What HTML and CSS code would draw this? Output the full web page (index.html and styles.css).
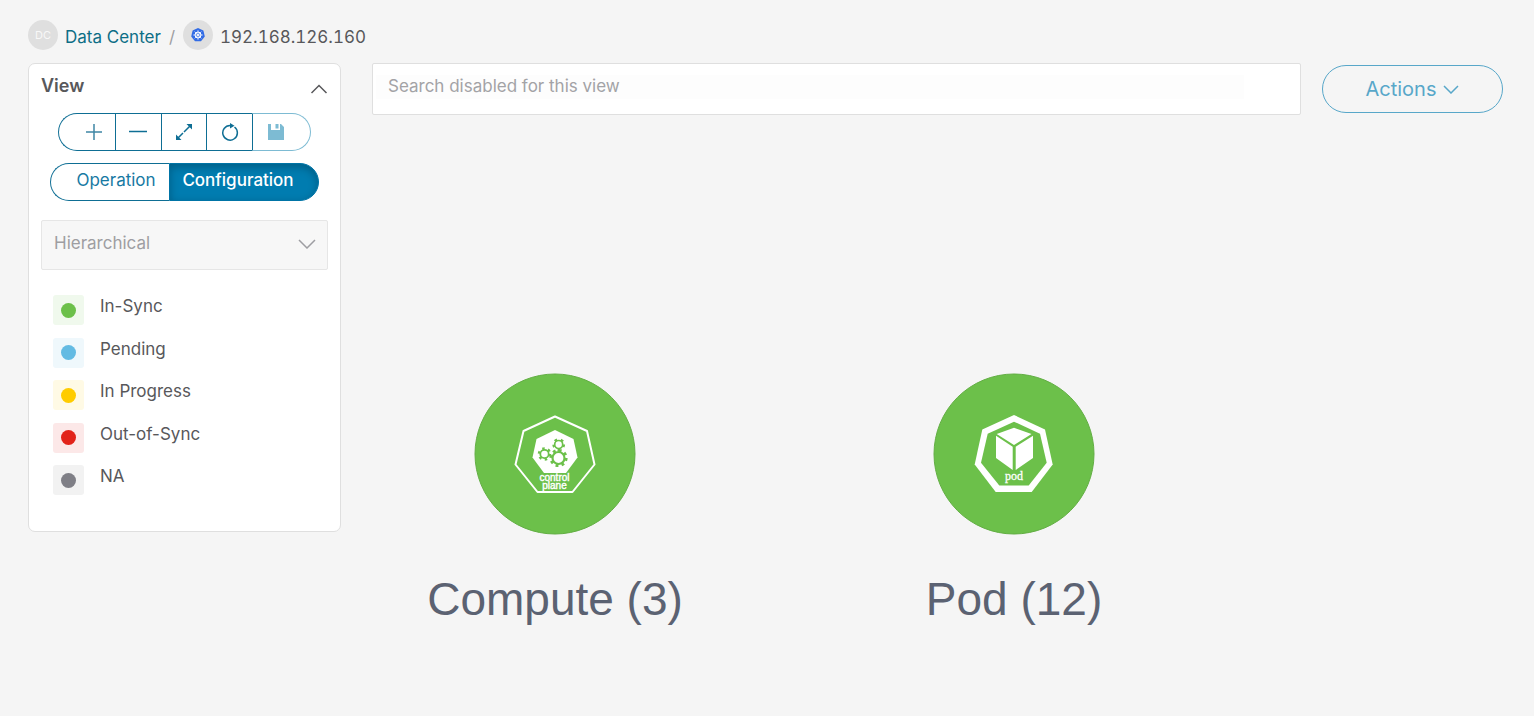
FILE: index.html
```
<!doctype html>
<html lang="en">
<head>
<meta charset="UTF-8">
<title>Data Center</title>
<link rel="stylesheet" href="styles.css">
</head>
<body>
	<nav class="breadcrumb">
		<span class="badge">DC</span>
		<a href="#">Data Center</a>
		<span class="separator">/</span>
		<span class="badge">
			<svg width="14" height="14" viewBox="0 0 14 14">
				<polygon points="7,0 12.4,2.6 13.8,8.5 10,13.2 4,13.2 0.2,8.5 1.6,2.6" fill="#326ce5"/>
				<g fill="none" stroke="#fff">
					<circle cx="7" cy="7" r="3" stroke-width="1"/>
					<path stroke-width=".7" d="M7 2.2v9.6M2.2 7h9.6M3.6 3.6l6.8 6.8M10.4 3.6l-6.8 6.8"/>
				</g>
			</svg>
		</span>
		<span class="current">192.168.126.160</span>
	</nav>

	<div class="layout">
		<aside class="panel">
			<div class="panel-header">
				<h2>View</h2>
				<button class="collapse" aria-label="Collapse">
					<svg width="18" height="10" viewBox="0 0 18 10"><path d="M1.5 9L9 1.5L16.5 9" fill="none" stroke="#58585b" stroke-width="1.5"/></svg>
				</button>
			</div>

			<div class="toolbar">
				<button aria-label="Zoom in">
					<svg width="18" height="18" viewBox="0 0 18 18"><path d="M9 1v16M1 9h16" stroke="#3f86a5" stroke-width="1.5"/></svg>
				</button>
				<button aria-label="Zoom out">
					<svg width="18" height="18" viewBox="0 0 18 18"><path d="M0 8.5h18" stroke="#0e6e94" stroke-width="1.5"/></svg>
				</button>
				<button aria-label="Fit">
					<svg width="18" height="18" viewBox="0 0 18 18">
						<path d="M3 15l5-5M9 9l6-6" stroke="#0e6e94" stroke-width="1.5"/>
						<path d="M17 1v5.500L11.500 1zM1 17v-5.500L6.500 17z" fill="#0e6e94"/>
					</svg>
				</button>
				<button aria-label="Refresh">
					<svg width="18" height="18" viewBox="0 0 18 18">
						<path d="M13.500 4A7.300 7.300 0 1 1 9 2.500H11" fill="none" stroke="#0e6e94" stroke-width="1.500"/>
						<path d="M9 0l4.500 2.800L9 5.600z" fill="#0e6e94"/>
					</svg>
				</button>
				<button aria-label="Save" disabled>
					<svg width="18" height="18" viewBox="0 0 18 18"><path d="M1 1h3v6h9V1h1l3 3v13H1zM8.500 1h3v4.500h-3z" fill="#7dbbd3"/></svg>
				</button>
			</div>

			<div class="toggle">
				<button>Operation</button>
				<button class="active">Configuration</button>
			</div>

			<div class="select-box">
				<select aria-label="Layout" disabled>
					<option>Hierarchical</option>
				</select>
				<svg width="18" height="10" viewBox="0 0 18 10"><path d="M1 1L9 9L17 1" fill="none" stroke="#9e9ea2" stroke-width="1.500"/></svg>
			</div>

			<ul class="legend">
				<li><span class="swatch in-sync"></span>In-Sync</li>
				<li><span class="swatch pending"></span>Pending</li>
				<li><span class="swatch in-progress"></span>In Progress</li>
				<li><span class="swatch out-of-sync"></span>Out-of-Sync</li>
				<li><span class="swatch na"></span>NA</li>
			</ul>
		</aside>

		<main class="content">
			<div class="topbar">
				<div class="search">
					<input type="text" placeholder="Search disabled for this view" aria-label="Search" disabled>
				</div>
				<button class="actions">Actions
					<svg width="16" height="10" viewBox="0 0 16 10"><path d="M1 2L8 9L15 2" fill="none" stroke="#58a7c9" stroke-width="1.500"/></svg>
				</button>
			</div>

			<div class="canvas">
				<div class="node compute">
					<svg width="162" height="162" viewBox="0 0 162 162">
						<circle cx="81" cy="81" r="80" fill="#6cc04a" stroke="#62ae43"/>
						<polygon points="81,43.500 113,58 120.500,91.500 98.500,119 63.500,119 41.500,91.500 49.500,58" fill="none" stroke="#fff" stroke-width="2" stroke-linejoin="round"/>
						<polygon points="81,57 99.500,66 103.500,84.500 92,100 70,100 58.500,84.500 62.500,66" fill="#fff"/>
						<!-- gears: ring + dashed ring for the teeth -->
						<g fill="none" stroke="#6cc04a">
							<circle cx="84.500" cy="85" r="6" stroke-width="2.200"/>
							<circle cx="84.500" cy="85" r="7.600" stroke-width="3" stroke-dasharray="2.800 3.170"/>
							<circle cx="70.500" cy="81" r="4.200" stroke-width="1.800"/>
							<circle cx="70.500" cy="81" r="5.500" stroke-width="2.600" stroke-dasharray="2.400 3.360"/>
							<circle cx="84.700" cy="71.500" r="4" stroke-width="1.700"/>
							<circle cx="84.700" cy="71.500" r="5.200" stroke-width="2.400" stroke-dasharray="2.600 3.930"/>
						</g>
						<text class="icon-sans" x="80.500" y="108">control</text>
						<text class="icon-sans" x="80.500" y="116">plane</text>
					</svg>
					<span class="node-label">Compute (3)</span>
				</div>
				<div class="node pod">
					<svg width="162" height="162" viewBox="0 0 162 162">
						<circle cx="81" cy="81" r="80" fill="#6cc04a" stroke="#62ae43"/>
						<polygon points="81,42 112,56.500 119.700,91.500 98.700,119 62.700,119 41.700,91.500 49.300,56.500" fill="#fff"/>
						<polygon points="81,48.700 107,60.700 113.700,89.700 95.700,112.500 66.300,112.500 48,89.700 54.700,60.700" fill="#6cc04a"/>
						<path d="M81 54.700L98.500 61L81 72L63.700 61zM63 62.700L79.700 73.700V97L63 85zM82.700 73.700L100 62.700V85L82.700 97z" fill="#fff"/>
						<text class="icon-serif" x="81" y="107">pod</text>
					</svg>
					<span class="node-label">Pod (12)</span>
				</div>
			</div>
		</main>
	</div>
</body>
</html>
```

FILE: styles.css
```
* {
	box-sizing: border-box;
}

body {
	margin: 0;
	padding: 20px 31px 0 28px;
	background-color: #f5f5f5;
	color: #58585b;
	font-family: Inter, "Liberation Sans", Arial, sans-serif;
	font-size: 17px;
	line-height: 22px;
}

button, input, select {
	font: inherit;
}

button {
	padding: 0;
	background: none;
	border: none;
}

.breadcrumb {
	display: flex;
	height: 43px;
}

.breadcrumb a,
.separator,
.current {
	padding-top: 6px;
}

.breadcrumb a {
	margin-left: 7px;
	color: #0d6e86;
	text-decoration: none;
}

.separator {
	margin: 0 8px;
	color: #9e9ea2;
}

.current {
	margin-left: 7px;
	font-variant-numeric: tabular-nums;
}

.badge {
	display: flex;
	align-items: center;
	justify-content: center;
	width: 30px;
	height: 30px;
	border-radius: 50%;
	background-color: #dfdfdf;
	color: #f8f8f8;
	font-size: 11px;
}

.layout {
	display: flex;
	align-items: flex-start;
	gap: 31px;
}

/* left panel */
.panel {
	flex: none;
	width: 313px;
	padding: 11px 12px 36px;
	background-color: #fff;
	border: 1px solid #dfdfdf;
	border-radius: 7px;
}

.panel-header {
	display: flex;
	justify-content: space-between;
	height: 38px;
}

.panel-header h2 {
	margin: 0;
	font-size: 18px;
	line-height: 22px;
	font-weight: 600;
}

.collapse {
	height: 26px;
}

.toolbar {
	display: flex;
	height: 38px;
	margin: 0 17px 12px;
}

.toolbar button {
	display: flex;
	align-items: center;
	justify-content: center;
	flex: 1;
	border: 1px solid #0e6e94;
	border-right: none;
}

.toolbar button:first-child {
	flex: none;
	width: 57px;
	padding-left: 14px;
	border-radius: 19px 0 0 19px;
}

.toolbar button:last-child {
	flex: none;
	width: 59px;
	padding-right: 12px;
	border: 1px solid #7dbbd3;
	border-left-color: #0e6e94;
	border-radius: 0 19px 19px 0;
}

.toggle {
	display: flex;
	height: 38px;
	margin: 0 9px 19px;
}

.toggle button {
	width: 119px;
	padding: 0 0 4px 12px;
	border: 1px solid #0e6e94;
	border-right: none;
	border-radius: 19px 0 0 19px;
	color: #1779a3;
}

.toggle .active {
	flex: 1;
	padding: 0 12px 4px 0;
	border: 1px solid #0074a6;
	border-radius: 0 19px 19px 0;
	background-color: #007cb0;
	box-shadow: inset 0 3px 8px rgba(0, 0, 0, .25);
	color: #fff;
	font-weight: 500;
}

.select-box {
	position: relative;
	margin-bottom: 25px;
}

.select-box select {
	display: block;
	width: 100%;
	height: 50px;
	padding: 0 12px 4px;
	appearance: none;
	background-color: #f7f7f7;
	border: 1px solid #e6e6e6;
	border-radius: 2px;
	color: #9e9ea2;
	opacity: 1;
}

.select-box svg {
	position: absolute;
	top: 19px;
	right: 12px;
}

.legend {
	display: flex;
	flex-direction: column;
	justify-content: space-between;
	height: 200px;
	margin: 0;
	padding: 0 12px;
	list-style: none;
}

.legend li {
	display: flex;
	gap: 16px;
	height: 30px;
}

.swatch {
	display: flex;
	align-items: center;
	justify-content: center;
	width: 31px;
	border-radius: 3px;
}

.swatch::before {
	content: "";
	width: 15px;
	height: 15px;
	border-radius: 50%;
}

.in-sync {
	background-color: #f0f9ed;
}

.in-sync::before {
	background-color: #6cc04a;
}

.pending {
	background-color: #eff8fc;
}

.pending::before {
	background-color: #64bbe3;
}

.in-progress {
	background-color: #fffae5;
}

.in-progress::before {
	background-color: #ffcc00;
}

.out-of-sync {
	background-color: #fce8e8;
}

.out-of-sync::before {
	background-color: #e2231a;
}

.na {
	background-color: #f2f2f2;
}

.na::before {
	background-color: #7f7f86;
}

/* search and topology */
.content {
	flex: 1;
}

.topbar {
	display: flex;
	align-items: center;
	gap: 21px;
}

.search {
	flex: 1;
	height: 52px;
	padding: 11px 56px 0 3px;
	background-color: #fff;
	border: 1px solid #dfdfdf;
	border-radius: 2px;
}

.search input {
	display: block;
	width: 100%;
	height: 24px;
	padding: 0 12px 2px;
	background-color: #fdfdfd;
	border: none;
}

.search input::placeholder {
	color: #a3a3a6;
}

.actions {
	display: flex;
	align-items: center;
	justify-content: center;
	gap: 7px;
	width: 181px;
	height: 48px;
	border: 1px solid #58a7c9;
	border-radius: 24px;
	color: #58a7c9;
	font-size: 20px;
}

.canvas {
	position: relative;
	height: 560px;
}

.node {
	position: absolute;
	top: 258px;
	display: flex;
	flex-direction: column;
	align-items: center;
	gap: 37px;
	width: 260px;
}

.compute {
	left: 53px;
}

.pod {
	left: 512px;
}

.node-label {
	color: #5b6272;
	font-family: "Liberation Sans", Arial, sans-serif;
	font-size: 46px;
	line-height: 54px;
}

.icon-sans {
	fill: #fff;
	stroke: #fff;
	stroke-width: .4px;
	font-family: "Liberation Sans", Arial, sans-serif;
	font-size: 10px;
	text-anchor: middle;
}

.icon-serif {
	fill: #fff;
	stroke: #fff;
	stroke-width: .3px;
	font-family: "Liberation Serif", "Times New Roman", serif;
	font-size: 12px;
	text-anchor: middle;
}
```
